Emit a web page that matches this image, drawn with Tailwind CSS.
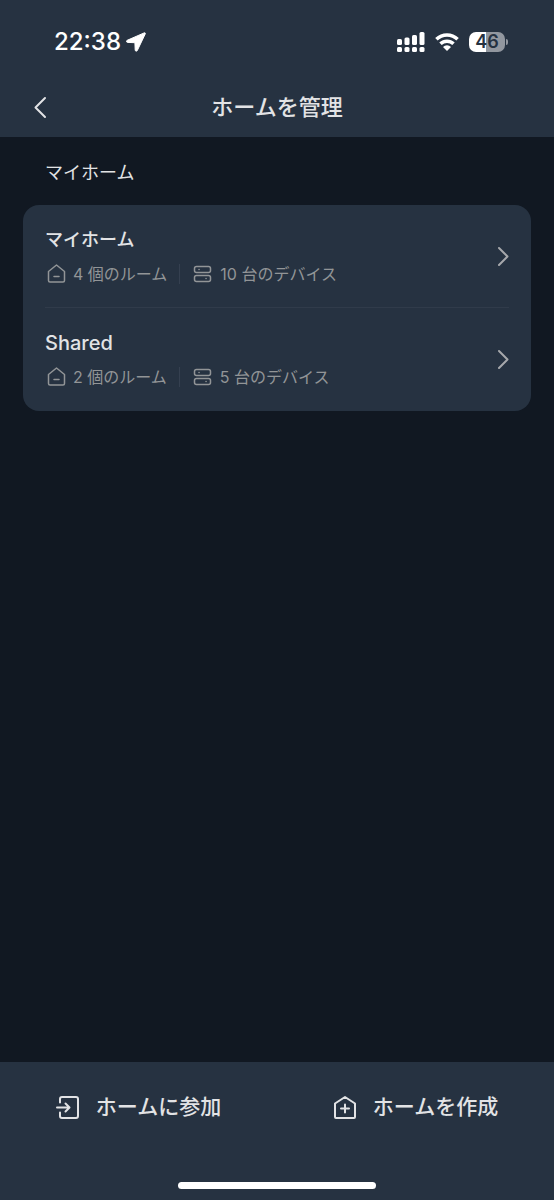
<!DOCTYPE html>
<html lang="ja">
  <head>
    <meta charset="UTF-8" />
    <meta name="viewport" content="width=device-width, initial-scale=1.0" />
    <title>ホームを管理</title>
    <!-- Tailwind CSS CDN -->
    <script src="https://cdn.jsdelivr.net/npm/@tailwindcss/browser@4"></script>
  </head>
  <body
    class="min-h-screen flex flex-col bg-[#111822] text-[#e2e3e5] font-['Inter','Noto_Sans_CJK_JP',sans-serif]"
  >
    <header class="bg-[#263241]">
      <!-- Status bar -->
      <div class="h-[78px] pt-[5px] pl-[54px] pr-[46px] flex items-center justify-between text-white">
        <div class="flex items-center gap-[5px]">
          <span class="text-2xl font-medium">22:38</span>
          <svg class="w-5 h-5" viewBox="0 0 20 20" fill="currentColor" stroke="currentColor" stroke-linejoin="round">
            <path d="M18.2.9 1.2 8.3c-1.200.6-.9 2 .4 2.100l7.300.3.3 7.400c.1 1.300 1.500 1.500 2.100.4L19.200 2c.4-.9-.2-1.500-1-1.100z" />
          </svg>
        </div>
        <div class="flex items-center gap-2.5">
          <svg class="w-[29px] h-5" viewBox="0 0 29 20" fill="currentColor">
            <rect x="1" y="7" width="5" height="6" rx="1.500" />
            <rect x="8.500" y="5.500" width="5" height="7.500" rx="1.500" />
            <rect x="16" y="3" width="5" height="10" rx="1.500" />
            <rect x="23.500" y="0" width="5" height="13" rx="1.500" />
            <rect x="1" y="15" width="5" height="5" rx="1.500" />
            <rect x="8.500" y="15" width="5" height="5" rx="1.500" />
            <rect x="16" y="15" width="5" height="5" rx="1.500" />
            <rect x="23.500" y="15" width="5" height="5" rx="1.500" />
          </svg>
          <svg class="w-6 h-[18px]" viewBox="0 0 24 18" fill="none" stroke="currentColor" stroke-width="3.500">
            <path d="M1.400 6.200a15.200 15.200 0 0 1 21.200 0" />
            <path d="M5.500 10.800a9.300 9.300 0 0 1 13 0" />
            <path d="M12 18 8 14a5.600 5.600 0 0 1 8 0z" fill="currentColor" stroke="none" />
          </svg>
          <div class="flex items-center gap-px">
            <div
              class="w-9 h-5 rounded-[7px] flex items-center justify-center bg-linear-to-r from-white from-46% to-[#92979f] to-46% text-[#263241] text-lg font-semibold"
            >
              46
            </div>
            <div class="w-[2px] h-[6px] rounded-r-full bg-[#92979f]"></div>
          </div>
        </div>
      </div>
      <!-- Title bar -->
      <div class="h-[59px] px-6 pb-[2px] grid grid-cols-[32px_1fr_32px] items-center">
        <button type="button" aria-label="戻る" class="h-8 flex items-center justify-center">
          <svg class="w-6 h-6" viewBox="0 0 24 24" fill="none" stroke="currentColor" stroke-width="2" stroke-linecap="round" stroke-linejoin="round">
            <path d="M17 3 7.500 12.500 17 22" />
          </svg>
        </button>
        <h1 class="text-[22px] leading-8 font-medium text-center">ホームを管理</h1>
      </div>
    </header>

    <main class="grow px-[23px]">
      <h2 class="pt-[22px] px-[22px] pb-[18px] text-lg leading-7">マイホーム</h2>
      <ul class="px-[22px] rounded-2xl bg-[#263241]">
        <li class="border-b border-[#303b4a]">
          <a href="#" class="pt-[21px] pb-[21px] flex items-center justify-between">
            <div class="flex flex-col gap-2">
              <span class="text-lg leading-7 font-medium">マイホーム</span>
              <div class="h-6 flex items-center text-base text-[#929597]">
                <svg class="w-6 h-6" viewBox="0 0 24 24" fill="none" stroke="currentColor" stroke-width="1.500" stroke-linecap="round" stroke-linejoin="round">
                  <path d="M3.500 9.500 11.500 3l8 6.500v9a1.500 1.500 0 0 1-1.500 1.500H5a1.500 1.500 0 0 1-1.500-1.500zM9 14.500h5" />
                </svg>
                <span class="ml-1">4 個のルーム</span>
                <span class="mx-3 w-px h-5 bg-[#354050]"></span>
                <svg class="w-6 h-6" viewBox="0 0 24 24" fill="none" stroke="currentColor" stroke-width="1.500" stroke-linecap="round">
                  <rect x="2.500" y="4.500" width="16" height="6" rx="2" />
                  <rect x="2.500" y="13.500" width="16" height="6" rx="2" />
                  <path d="M7 7.500h.1M14 16.500h.1" />
                </svg>
                <span class="ml-1">10 台のデバイス</span>
              </div>
            </div>
            <svg class="w-3 h-5" viewBox="0 0 12 20" fill="none" stroke="#a6a8ab" stroke-width="2" stroke-linecap="round" stroke-linejoin="round">
              <path d="m2 2 8.500 8.500L2 19" />
            </svg>
          </a>
        </li>
        <li>
          <a href="#" class="pt-[21px] pb-[22px] flex items-center justify-between">
            <div class="flex flex-col gap-2">
              <span class="text-xl leading-7 font-medium">Shared</span>
              <div class="h-6 flex items-center text-base text-[#929597]">
                <svg class="w-6 h-6" viewBox="0 0 24 24" fill="none" stroke="currentColor" stroke-width="1.500" stroke-linecap="round" stroke-linejoin="round">
                  <path d="M3.500 9.500 11.500 3l8 6.500v9a1.500 1.500 0 0 1-1.500 1.500H5a1.500 1.500 0 0 1-1.500-1.500zM9 14.500h5" />
                </svg>
                <span class="ml-1">2 個のルーム</span>
                <span class="mx-3 w-px h-5 bg-[#354050]"></span>
                <svg class="w-6 h-6" viewBox="0 0 24 24" fill="none" stroke="currentColor" stroke-width="1.500" stroke-linecap="round">
                  <rect x="2.500" y="4.500" width="16" height="6" rx="2" />
                  <rect x="2.500" y="13.500" width="16" height="6" rx="2" />
                  <path d="M7 7.500h.1M14 16.500h.1" />
                </svg>
                <span class="ml-1">5 台のデバイス</span>
              </div>
            </div>
            <svg class="w-3 h-5" viewBox="0 0 12 20" fill="none" stroke="#a6a8ab" stroke-width="2" stroke-linecap="round" stroke-linejoin="round">
              <path d="m2 2 8.500 8.500L2 19" />
            </svg>
          </a>
        </li>
      </ul>
    </main>

    <footer class="bg-[#263241]">
      <div class="pt-[29px] grid grid-cols-2">
        <button type="button" class="h-8 flex items-center justify-center gap-4 text-[21px] font-medium">
          <svg class="w-6 h-6" viewBox="0 0 24 24" fill="none" stroke="currentColor" stroke-width="2" stroke-linecap="round" stroke-linejoin="round">
            <path d="M4 7.500V4a2 2 0 0 1 2-2h14a2 2 0 0 1 2 2v17a2 2 0 0 1-2 2H6a2 2 0 0 1-2-2v-3.500M1 12.500h12M9.500 8.500l4 4-4 4" />
          </svg>
          ホームに参加
        </button>
        <button type="button" class="h-8 flex items-center justify-center gap-4 text-[21px] font-medium">
          <svg class="w-6 h-6" viewBox="0 0 24 24" fill="none" stroke="currentColor" stroke-width="2" stroke-linecap="round" stroke-linejoin="round">
            <path d="M2 8.500 12 2l10 6.500V22a1 1 0 0 1-1 1H3a1 1 0 0 1-1-1zM12 9.500v8M8 13.500h8" />
          </svg>
          ホームを作成
        </button>
      </div>
      <div class="mx-auto mt-[59px] mb-[11px] w-[198px] h-[7px] rounded-full bg-white"></div>
    </footer>
  </body>
</html>
